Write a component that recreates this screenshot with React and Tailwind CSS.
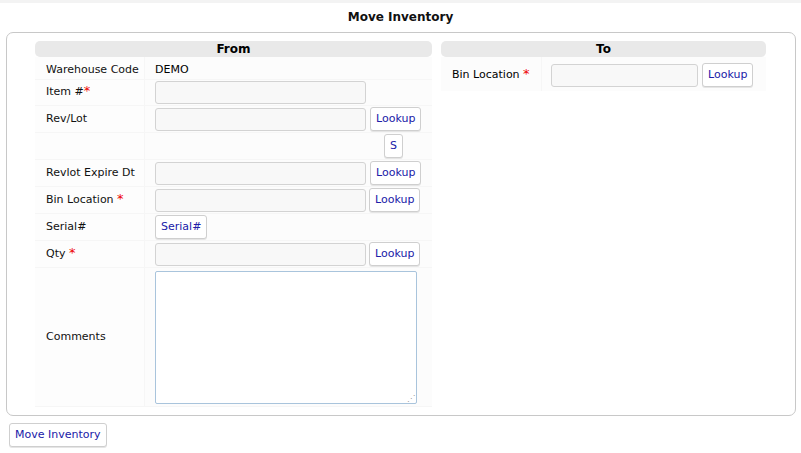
export default function App() {
  const f = { fontFamily: '"DejaVu Sans", Verdana, sans-serif' };
  const Inp = () => <div className="w-[211px] h-[23px] rounded-[3px] border border-[#d3d3d3] bg-[#f8f8f8]" />;
  const Btn = ({ children, w }) => (
    <div className={`h-[24px] ${w || ""} px-[5px] flex items-center justify-center rounded-[3px] border border-[#cfcfcf] bg-white text-[#2020a8] text-[11px] shadow-[0_1px_0_#e5e5e5]`}>{children}</div>
  );
  const Star = () => <span className="text-[#e00] text-[13px] leading-none">*</span>;
  const Row = ({ label, h, children }) => (
    <div className={`flex ${h} border-b border-[#f6f6f6]`}>
      <div className="w-[110px] pl-[11px] flex items-center text-[11px] text-[#111] border-r border-[#f6f6f6] bg-[#fdfdfd]">{label}</div>
      <div className="flex-1 pl-[10px] flex items-center gap-[4px]">{children}</div>
    </div>
  );
  return (
    <div style={f} className="w-[801px] h-[453px] bg-white relative overflow-hidden">
      <div className="h-[3px] bg-[#f3f3f3]" />
      <div className="text-center text-[12px] font-bold text-[#111] mt-[5px] h-[24px]">Move Inventory</div>
      <div className="mx-[6px] w-[790px] h-[384px] border border-[#c8c8c8] rounded-[7px] flex gap-[9px] pl-[28px] pt-[8px]">
        <div className="w-[397px]">
          <div className="h-[16px] bg-[#e9e9e9] rounded-[5px] text-center text-[12px] font-bold leading-[17px]">From</div>
          <div className="bg-[#fcfcfc]">
            <Row label={<span className="pt-[4px]">Warehouse Code</span>} h="h-[23px]"><span className="text-[11px] pt-[4px]">DEMO</span></Row>
            <Row label={<span>Item #<Star /></span>} h="h-[26px]"><Inp /></Row>
            <Row label="Rev/Lot" h="h-[27px]"><Inp /><Btn>Lookup</Btn></Row>
            <Row label="" h="h-[27px]"><div className="w-[211px]" /><div className="ml-[14px]"><Btn>S</Btn></div></Row>
            <Row label="Revlot Expire Dt" h="h-[27px]"><Inp /><Btn>Lookup</Btn></Row>
            <Row label={<span>Bin Location <Star /></span>} h="h-[27px]"><Inp /><div className="-ml-[1px]"><Btn>Lookup</Btn></div></Row>
            <Row label="Serial#" h="h-[27px]"><Btn>Serial#</Btn></Row>
            <Row label={<span>Qty <Star /></span>} h="h-[27px]"><Inp /><div className="-ml-[1px]"><Btn>Lookup</Btn></div></Row>
            <Row label="Comments" h="h-[139px]"><div className="w-[262px] h-[133px] border border-[#a9c4dc] rounded-[2px] bg-white relative"><span className="absolute right-[1px] bottom-[-2px] text-[8px] text-[#999]">⋰</span></div></Row>
          </div>
        </div>
        <div className="w-[325px]">
          <div className="h-[16px] bg-[#e9e9e9] rounded-[5px] text-center text-[12px] font-bold leading-[17px]">To</div>
          <div className="bg-[#fcfcfc] flex h-[34px]">
            <div className="w-[101px] pl-[11px] pt-[2px] flex items-center text-[11px] border-r border-[#f6f6f6]"><span>Bin Location <Star /></span></div>
            <div className="flex-1 pl-[9px] pt-[2px] flex items-center gap-[4px]"><div className="w-[147px] h-[23px] rounded-[3px] border border-[#d3d3d3] bg-[#f8f8f8]" /><Btn>Lookup</Btn></div>
          </div>
        </div>
      </div>
      <div className="ml-[9px] mt-[7px] inline-flex"><Btn>Move Inventory</Btn></div>
    </div>
  );
}
